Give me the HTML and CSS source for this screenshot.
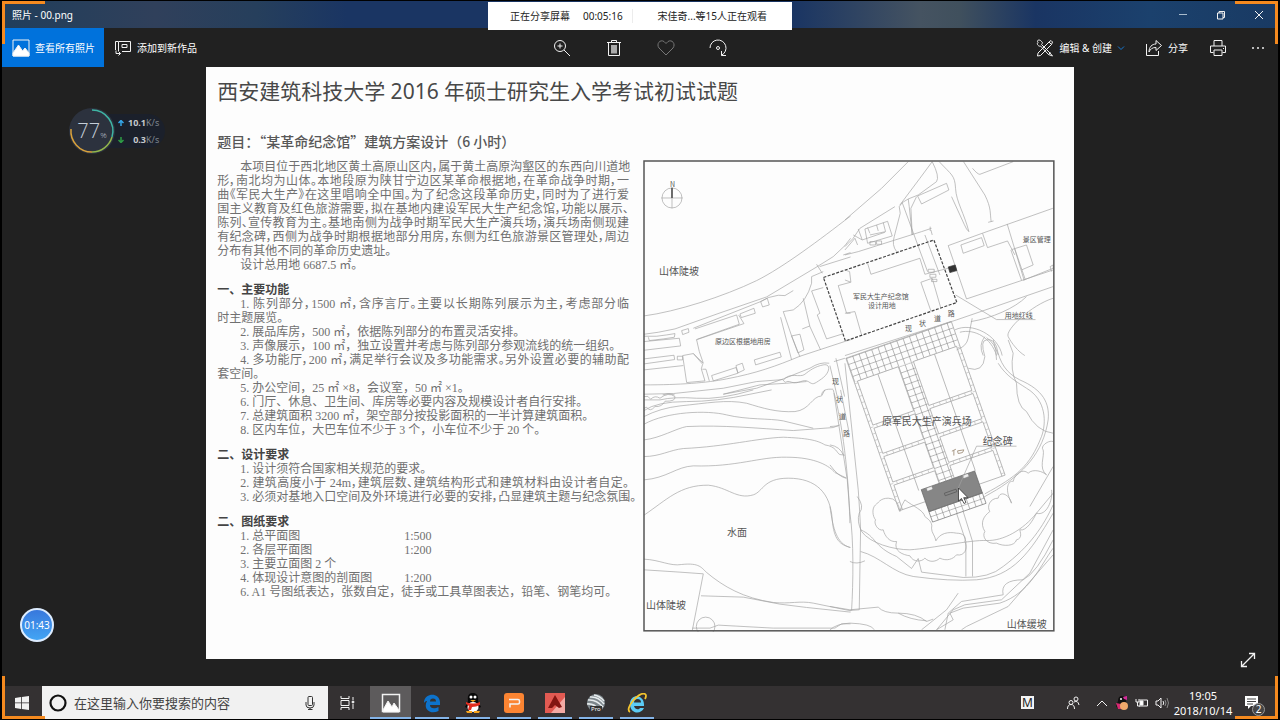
FILE: index.html
```html
<!DOCTYPE html>
<html lang="zh-CN">
<head>
<meta charset="utf-8">
<title>照片 - 00.png</title>
<link rel="stylesheet" href="styles.css">
</head>
<body>
<div class="screen">
  <header class="titlebar">
    <span class="window-title">照片 - 00.png</span>
    <div class="window-buttons">
      <button aria-label="最小化"><svg width="10" height="10" viewBox="0 0 10 10"><path d="M1 4.500h8" stroke="#a9bccd"/></svg></button>
      <button aria-label="还原"><svg width="10" height="10" viewBox="0 0 10 10"><path d="M1.500 3h5.500v6H1.500zM3 3V1.500h5.500V7.500H7"/></svg></button>
      <button aria-label="关闭"><svg width="10" height="10" viewBox="0 0 10 10"><path d="M1 1l8 8M9 1l-8 8"/></svg></button>
    </div>
  </header>

  <nav class="toolbar">
    <div class="tools">
      <button class="tool primary">
        <svg width="18" height="18" viewBox="0 0 18 18"><path d="M1 1h16v16H1z"/><path d="M1 14l5.500-8 4 6 2.500-3 4 5v3H1z" fill="#fff"/></svg>
        <span>查看所有照片</span>
      </button>
      <button class="tool">
        <svg width="18" height="18" viewBox="0 0 18 18"><path d="M4.500 12V2.500h12v10H8M1.500 11V2.500H4M8 5.500h5v3H8zM2 11.500v3h4.500M4.500 12.500l2 2-2 2"/></svg>
        <span>添加到新作品</span>
      </button>
    </div>
    <div class="tools center">
      <button class="tool icon" aria-label="放大"><svg width="18" height="18" viewBox="0 0 18 18"><circle cx="7" cy="7" r="5.500"/><path d="M11 11l6 6M4.500 7h5M7 4.500v5"/></svg></button>
      <button class="tool icon" aria-label="删除"><svg width="18" height="18" viewBox="0 0 18 18"><path d="M2 3.500h14M6.500 3V1.500h5V3M3.500 4v12.500h11V4"/><path d="M6 6h6v8.500H6z" fill="#aaa" stroke="none"/></svg></button>
      <button class="tool icon dim" aria-label="收藏"><svg width="18" height="18" viewBox="0 0 18 18"><path d="M9 16L2 9C-1 5 3 0 7 2.500L9 4.500l2-2C15 0 19 5 16 9z"/></svg></button>
      <button class="tool icon" aria-label="旋转"><svg width="18" height="18" viewBox="0 0 18 18"><path d="M1 9A8 8 0 1 1 12.500 16.200M12.500 12v4.500H17"/><circle cx="9" cy="9" r="1.500"/></svg></button>
    </div>
    <div class="tools end">
      <button class="tool edit">
        <svg width="18" height="18" viewBox="0 0 18 18"><path d="M2 14L13 3l2.500 2.500-11 11L1.500 17zM13 3l2-1.500 1.500 1.500-1 2.500M2 3.500C0 1 4 0 5.500 2.500c2 1-0 3 0 3L14 14l2.500 3-4-1.500L4.500 7C3 8 0 5 2 3.500zM12.500 15.500l2-2"/></svg>
        <span>编辑 &amp; 创建</span>
        <svg class="chevron" width="8" height="8" viewBox="0 0 8 8"><path d="M1 2.500l3 3 3-3"/></svg>
      </button>
      <button class="tool">
        <svg width="18" height="18" viewBox="0 0 18 18"><path d="M1.500 5v11.500h12V12M4 13c0-5 3-8 7-8V1.500L16.500 6.500 11 11.500V8.500C7 8.500 5.500 10 4 13z"/></svg>
        <span>分享</span>
      </button>
      <button class="tool square" aria-label="打印"><svg width="18" height="18" viewBox="0 0 18 18"><path d="M5 7V1.500h8V7M4.500 13.500h-3v-6.500h15v6.500h-3M5 11h8v5.500H5zM14 9.500h1"/></svg></button>
      <button class="tool square" aria-label="更多"><svg width="14" height="4" viewBox="0 0 14 4"><g fill="#eee" stroke="none"><circle cx="2" cy="2" r="1"/><circle cx="7" cy="2" r="1"/><circle cx="12" cy="2" r="1"/></g></svg></button>
    </div>
  </nav>

  <main class="stage">
    <article class="paper">
      <h1>西安建筑科技大学 2016 年硕士研究生入学考试初试试题</h1>
      <h2>题目：“某革命纪念馆”建筑方案设计（6 小时）</h2>
      <div class="columns">
        <div class="brief">
          <section>
            <p><span class="row full first">本项目位于西北地区黄土高原山区内，属于黄土高原沟壑区的东西向川道地</span><span class="row full">形，南北均为山体。本地段原为陕甘宁边区某革命根据地，在革命战争时期，一</span><span class="row full">曲《军民大生产》在这里唱响全中国。为了纪念这段革命历史，同时为了进行爱</span><span class="row full">国主义教育及红色旅游需要，拟在基地内建设军民大生产纪念馆，功能以展示、</span><span class="row full">陈列、宣传教育为主。基地南侧为战争时期军民大生产演兵场，演兵场南侧现建</span><span class="row full">有纪念碑，西侧为战争时期根据地部分用房，东侧为红色旅游景区管理处，周边</span><span class="row">分布有其他不同的革命历史遗址。</span></p>
            <p class="row first">设计总用地 6687.5 ㎡。</p>
          </section>
          <section>
            <h3>一、主要功能</h3>
            <p><span class="row full first">1. 陈列部分，1500 ㎡，含序言厅。主要以长期陈列展示为主，考虑部分临</span><span class="row">时主题展览。</span></p>
            <p class="row first">2. 展品库房，500 ㎡，依据陈列部分的布置灵活安排。</p>
            <p class="row first">3. 声像展示，100 ㎡，独立设置并考虑与陈列部分参观流线的统一组织。</p>
            <p><span class="row full first">4. 多功能厅，200 ㎡，满足举行会议及多功能需求。另外设置必要的辅助配</span><span class="row">套空间。</span></p>
            <p class="row first">5. 办公空间，25 ㎡ ×8，会议室，50 ㎡ ×1。</p>
            <p class="row first">6. 门厅、休息、卫生间、库房等必要内容及规模设计者自行安排。</p>
            <p class="row first">7. 总建筑面积 3200 ㎡，架空部分按投影面积的一半计算建筑面积。</p>
            <p class="row first">8. 区内车位，大巴车位不少于 3 个，小车位不少于 20 个。</p>
          </section>
          <section>
            <h3>二、设计要求</h3>
            <p class="row first">1. 设计须符合国家相关规范的要求。</p>
            <p class="row full first">2. 建筑高度小于 24m，建筑层数、建筑结构形式和建筑材料由设计者自定。</p>
            <p class="row full first">3. 必须对基地入口空间及外环境进行必要的安排，凸显建筑主题与纪念氛围。</p>
          </section>
          <section>
            <h3>二、图纸要求</h3>
            <p class="row first scaled"><span>1. 总平面图</span><span>1:500</span></p>
            <p class="row first scaled"><span>2. 各层平面图</span><span>1:200</span></p>
            <p class="row first">3. 主要立面图 2 个</p>
            <p class="row first scaled"><span>4. 体现设计意图的剖面图</span><span>1:200</span></p>
            <p class="row first">6. A1 号图纸表达，张数自定，徒手或工具草图表达，铅笔、钢笔均可。</p>
          </section>
        </div>

        <svg class="siteplan" viewBox="643 160 412 472" role="img" aria-label="总平面地形图">
          <defs>
            <pattern id="tiles" width="20" height="19" patternUnits="userSpaceOnUse"><path d="M0 0H20M0 0V19" stroke="#777" stroke-width="3" fill="none"/></pattern>
            <pattern id="edge" width="10" height="20" patternUnits="userSpaceOnUse"><path d="M0 0H10" stroke="#888" stroke-width="2" fill="none"/></pattern>
            <pattern id="band" width="20" height="10" patternUnits="userSpaceOnUse"><path d="M0 0V10" stroke="#888" stroke-width="2" fill="none"/></pattern>
          </defs>

          <!-- north-west: hillside road and old settlement -->
          <g class="ink" transform="translate(640 155) scale(.3333)">
            <circle cx="96" cy="129" r="30"/><path d="M64 129H128M96 98V160"/><path d="M96 98V129" stroke="#555" stroke-width="5"/>
            <path d="M12 483C110 470 250 425 350 377C430 337 540 254 632 183"/>
            <path d="M12 538L55 532L105 522L240 474L380 426L532 335L580 305L615 272L632 250"/>
            <path d="M160 520L362 440L385 428L415 421L435 422L460 407"/>
            <path d="M165 522L290 480L298 508L172 553M168 555L312 506L296 480M300 477L342 460L346 475L304 488zM362 440L382 430L388 450L368 456z"/>
            <path d="M343 615L420 592L424 606L347 630zM215 662L288 638L294 655L220 678zM288 632L307 625L313 645L294 654z"/>
            <path d="M12 544H50L80 540L105 536L103 547L70 552L28 557L25 547M125 527L145 521L147 532L128 539z"/>
            <path d="M12 560L118 550L122 573L12 586M12 612L102 601L104 614L12 627M112 604H128V615H112zM12 645L130 632M128 602L160 596L190 625L178 590L170 555M160 596L188 628L184 642L195 678L140 683L128 602M187 643H198L208 678"/>
            <path d="M12 690C120 690 200 684 260 672C350 655 410 633 480 604L620 558L640 552"/>
            <path d="M422 487L455 615M430 470L460 465Q500 440 515 385V365L550 350M430 470L455 543L480 606M490 430L510 515L542 585M455 543L480 538L492 585L474 594zM487 522L510 513M515 408L550 398M515 408L540 475L532 480L560 552L608 537"/>
            <path d="M530 328L547 355M539 335L632 306M595 392L632 382M595 392L620 475H632M610 300L632 293"/>
            <path d="M570 632L592 725M588 610L614 725M568 625Q540 620 510 640L430 672L350 700L250 718M250 718L360 690L440 685L500 680"/>
            <path d="M430 676C450 650 480 670 495 658S525 635 550 630S570 655 545 672S520 690 505 680S475 690 455 682S440 690 430 676M545 720C548 700 570 703 580 703"/>
            <path d="M12 718L100 716L250 700L350 680L430 674M68 720Q85 712 104 720"/>
          </g>

          <!-- north-east: administration blocks and project site -->
          <g class="ink" transform="translate(845 155) scale(.3333)">
            <path d="M0 195L110 100L190 20M0 275Q25 255 45 220L150 155M165 150L225 70L262 20M262 20Q285 65 275 80L220 120L190 132L172 143L163 155L166 175"/>
            <path d="M172 143L248 350M166 175L148 245Q140 270 155 290M190 132L193 155L202 240M215 125L198 160L202 240M0 300L40 290L230 230L260 220M256 215V228M258 225L262 240"/>
            <path d="M40 222L52 255L25 240M52 255L120 232M60 222L128 199L142 243L68 265zM75 235L68 218M95 210L100 228M115 203L122 230L75 240M38 270L30 250L0 285"/>
            <path d="M283 20C320 60 330 60 332 100S358 175 372 230Q365 225 358 208L320 125M356 20L420 120C440 160 435 175 439 200M430 202L446 198M218 123L305 85L312 105L230 147z"/>
            <path d="M383 40Q398 58 405 58L505 20M310 272L412 235L624 160M310 272L365 432L625 345M348 270L410 248L418 272L355 295zM413 235L428 278L488 258L510 300M487 207L538 376M498 285L530 376M500 284L545 270L565 330L530 345M510 282L541 373M535 376L625 340V330L616 335L620 350"/>
            <path d="M68 325L78 358L225 310L240 358L310 340M228 382L262 370L288 460M228 382L258 468M0 375L18 382L14 350L0 345M0 475L30 470L50 540M240 240L285 360"/>
            <path d="M332 420L455 494H572M0 602L335 495L625 395M625 430C560 450 480 525 490 545S520 590 540 602M382 490L370 550Q365 575 335 585"/>
            <path d="M330 525C380 500 460 540 472 602M345 532C390 520 440 550 455 602M420 545Q400 570 415 602M425 548Q450 565 460 600M378 500C440 490 510 460 545 425"/>
            <path d="M250 343H268V352H250zM255 358H273V367H255zM260 373H276V380H260zM75 260H92V270H75zM95 258H110V268H95z"/>
            <path d="M310 336L331 330L336 347L315 353z" fill="#333" stroke="#333"/>
          </g>
          <path d="M823.500 277.500L934 240L957 302.500L845.500 341z" fill="none" stroke="#444" stroke-width="1.200" stroke-dasharray="3 1.500"/>

          <!-- south-west: terraces and water -->
          <g class="ink" transform="translate(640 390) scale(.3333)">
            <path d="M12 30H60Q100 20 170 25T340 0M12 62Q50 35 140 35T330 13L395 0M12 80Q60 55 120 48C200 40 260 28 320 40C370 55 410 68 465 65C510 60 515 20 545 18L555 0"/>
            <path d="M12 103C80 65 200 60 260 75S390 85 430 93L520 115M12 150C60 145 110 115 140 110C250 105 350 115 460 122L580 113L600 105"/>
            <path d="M12 200C60 200 90 180 130 176C260 170 350 145 430 142C500 145 530 150 555 165C590 170 590 190 600 194L615 196"/>
            <path d="M12 270C80 265 110 230 160 228C290 232 360 200 440 202C530 202 570 230 585 248L620 265M12 376C80 330 120 285 205 286C265 292 290 330 340 315C370 305 370 265 445 265C530 265 572 310 577 390C582 450 600 465 632 473"/>
            <path d="M12 508C60 510 90 530 125 524C180 518 185 535 200 548C250 590 310 625 400 638C450 643 480 632 520 640L632 663M12 540L120 547L190 552L157 722M183 618L310 622L420 643L500 653L632 667"/>
            <circle cx="197" cy="710" r="28"/><path d="M157 715H210L235 706L400 715H585L605 702H632"/>
            <path d="M12 20Q25 15 32 28Q45 15 60 25Q85 5 105 20Q108 35 75 34Q65 52 45 50Q30 68 20 52L12 55"/>
            <path d="M580 0C600 70 625 210 630 400M602 0L626 120"/>
          </g>

          <!-- parade ground -->
          <g transform="translate(830 340) scale(.3333)">
            <g class="ink">
              <path d="M12 65L45 55M45 70L85 450Q90 520 92 570L88 810M60 520C72 600 70 730 65 812M60 812L88 810M60 665Q80 675 105 663"/>
              <path d="M0 375Q25 410 48 415M0 260L25 258M0 315Q30 320 40 345M0 500C10 570 20 610 60 623M82 470Q105 500 88 520Q80 545 95 575C120 610 190 630 240 630C310 625 420 600 470 602S580 570 620 520L670 460"/>
              <path d="M12 160L52 420L60 520"/>
              <path d="M92 570C140 590 130 620 200 650L245 686L265 656L275 697L400 713Q480 715 520 680C600 620 640 560 670 495M92 635C150 650 190 700 250 710Q360 725 440 720C550 710 600 640 670 520"/>
              <path d="M380 520L408 605V710M400 515L428 605V710"/>
              <path d="M415 85Q460 100 465 50Q450 0 470 0Q490 -5 500 20C510 70 530 100 570 120C640 150 660 190 655 240C640 340 580 400 500 450L460 473M505 70C530 110 560 125 590 145C650 180 650 250 635 290C600 380 560 410 465 462"/>
              <path d="M490 0Q500 30 500 60M535 0L550 40Q540 90 560 130Q560 200 590 215Q620 275 670 280"/>
              <path d="M210 515Q205 475 175 475C150 475 145 490 137 495C125 505 128 530 137 540C130 550 145 575 160 570C165 590 180 608 200 605C190 635 220 645 240 648C250 668 275 667 285 655C300 670 320 665 330 655C350 665 370 658 380 645C405 650 415 625 405 605C410 590 400 580 380 580C355 575 330 580 318 603C315 585 305 580 305 565C310 545 290 535 285 530C280 510 250 500 225 480Q215 495 210 515"/>
              <path d="M545 490C540 465 510 450 505 475C480 475 470 500 480 515C460 530 450 550 465 575C455 590 470 615 500 610C520 620 555 620 560 600C580 595 570 575 570 570C590 575 610 540 620 520C650 530 670 480 665 450M545 490C520 440 540 420 550 425C555 400 580 385 595 400C610 385 640 395 650 405C625 385 645 350 640 330C630 320 655 300 670 305"/>
              <path d="M670 380L600 500M670 570L600 700L515 780L405 795L370 810L320 870M670 600Q620 700 580 720Q510 720 520 765L395 785L355 820L345 870M670 625C630 680 600 760 510 790L400 805L360 820L370 840L320 870M670 645L535 800L410 860L395 870M275 870L350 810L385 760M0 800L60 810L145 802Q160 820 205 820Q260 820 290 845L310 838M205 820Q240 840 290 843M0 870Q20 852 60 850Q125 852 133 870"/>
            </g>
            <g transform="translate(48 55) rotate(-19.300)">
              <path d="M0 0H335V76H0zM140 76H188V447H140z" fill="url(#tiles)"/>
              <path d="M0 76H10V485H0zM325 76H335V489H325z" fill="url(#edge)"/>
              <path d="M10 216H140V226H10zM10 306H140V316H10zM10 397H140V407H10zM188 216H325V226H188zM188 306H325V316H188zM188 397H325V407H188z" fill="url(#band)"/>
              <path class="ink" d="M0 0H335V489H253M83 485H0V0M10 76H140V216H10zM188 76H325V216H188zM10 226H140V306H10zM188 226H325V306H188zM10 316H140V397H10zM188 316H325V397H188zM140 447V407H10V485M188 447V407H325V489M75 76V447M255 76V447"/>
              <path d="M83 447H253V517H83z" fill="#868686" stroke="#666" stroke-width="2"/>
              <path d="M83 517H253V550H83z" fill="url(#tiles)" stroke="#777" stroke-width="2"/>
              <path d="M100 449H115V456H100zM215 449H230V456H215z" fill="#eee"/>
              <path d="M145 480H182V488H145z" fill="none" stroke="#555" stroke-width="2"/>
            </g>
            <path class="ink" d="M560 319H440L385 445"/>
            <path d="M366 334L378 328M372 331V347M383 333L402 330L398 338L385 341z" stroke="#a99a88" stroke-width="3" fill="none"/>
          </g>

          <g class="label large">
            <text x="659" y="275">山体陡坡</text><text x="727" y="536">水面</text><text x="646" y="609">山体陡坡</text><text x="1007" y="628">山体缓坡</text>
            <text x="882" y="425">原军民大生产演兵场</text><text x="983" y="445">纪念碑</text>
          </g>
          <g class="label small">
            <text x="715" y="344">原边区根据地用房</text><text x="853" y="299">军民大生产纪念馆</text><text x="868" y="308">设计用地</text><text x="1023" y="242">景区管理</text><text x="1005" y="318">用地红线</text>
            <text x="905" y="331">现</text><text x="919" y="326">状</text><text x="934" y="321">道</text><text x="948" y="316">路</text>
            <text x="832" y="384">现</text><text x="836" y="402">状</text><text x="839" y="419">道</text><text x="843" y="436">路</text>
            <text x="670" y="187">N</text>
          </g>
          <rect x="644" y="161" width="410" height="470" fill="none" stroke="#555" stroke-width="1.500"/>
        </svg>
      </div>
    </article>
  </main>

  <footer class="taskbar">
    <button class="start" aria-label="开始"><svg width="14" height="14" viewBox="0 0 14 14"><path d="M0 2l6-1v5.500H0zM6.800 .9L14 0v6.500H6.800zM0 7.300h6v5.600l-6-.9zM6.800 7.300H14V14l-7.200-1z" fill="#f2f2f2" stroke="none"/></svg></button>
    <label class="search">
      <svg width="20" height="20" viewBox="0 0 20 20"><circle cx="10" cy="10" r="7.500" stroke="#111" stroke-width="2.200"/></svg>
      <input type="text" aria-label="搜索" placeholder="在这里输入你要搜索的内容">
      <svg width="12" height="16" viewBox="0 0 12 16"><rect x="4" y="1.500" width="4.500" height="9" rx="1" stroke="#333"/><path d="M2 7v3q0 3 4 3t4-3V7M6 13v2M4 14.500h4.500" stroke="#333"/></svg>
    </label>
    <div class="apps">
      <button class="app plain" aria-label="任务视图"><svg width="16" height="14" viewBox="0 0 16 14"><path d="M2 0v2.500M10 0v2.500M2 4.500h8v5H2zM2 14v-2.500h8V14M2 2.500h8M14 1v3M14 8v5"/><circle cx="14" cy="6" r="1" fill="#fff"/></svg></button>
      <button class="app active" aria-label="照片"><svg width="20" height="20" viewBox="0 0 20 20"><path d="M1.500 1.500h17v17h-17z" stroke-width="1.500"/><path d="M2 17l5-9 4 6 2-4 5 7v2H2z" fill="#fff"/></svg></button>
      <button class="app" aria-label="Edge"><svg width="20" height="20" viewBox="0 0 20 20"><path d="M2 9C3 0 17-1 18 9v3H8c0 4 5 4 8.500 2v4C7 22 1 15 5 8 4 8 3 8.500 2 10z" fill="#0d73cc" stroke="none"/><path d="M8 8.500q0-3 3-3t3 3z" fill="#333" stroke="none"/></svg></button>
      <button class="app" aria-label="QQ"><svg width="20" height="20" viewBox="0 0 20 20"><g stroke="none"><path d="M5 8C4 1 7 0 10 0s6 2 5 8l3 6-2 1-1-2H5l-1 2-2-1z" fill="#080808"/><ellipse cx="10" cy="14" rx="5.500" ry="5" fill="#fff"/><path d="M3 9q7 3 14 0v3q-4 2-8 2l-1 3H5l1-4-3-2z" fill="#e22d20"/><circle cx="8" cy="4" r="1.500" fill="#fff"/><circle cx="12" cy="4" r="1.500" fill="#fff"/><path d="M7 7h6l-3 2zM3 18h6v2H4zM11 18h6l-1 2h-5z" fill="#f7a51b"/></g></svg></button>
      <button class="app" aria-label="WPS 演示"><svg width="20" height="20" viewBox="0 0 20 20"><rect width="20" height="20" rx="3" fill="#fb8432" stroke="none"/><path d="M5 6.500h9q1.500 0 1.500 1.500v1.500q0 1.500-1.500 1.500H6v3.500" stroke-width="1.500"/></svg></button>
      <button class="app" aria-label="AutoCAD"><svg width="20" height="20" viewBox="0 0 20 20"><path d="M0 0h20v20H0z" fill="#e25a52" stroke="none"/><path d="M20 4v16H6z" fill="#f3aaa4" stroke="none"/><path d="M10 2L3 15h4l3-3 4 3 3-1z" fill="#831511" stroke="none"/></svg></button>
      <button class="app" aria-label="Google Earth Pro"><svg width="20" height="20" viewBox="0 0 20 20"><circle cx="10" cy="10" r="9" fill="#7d868b" stroke="none"/><path d="M2 7q8-1 15 7M4 4q8-1 14 7M8 2q6 1 10 6M1 11q7-1 12 6" stroke="#e7ecee" stroke-width="1.500"/><rect x="4" y="13" width="12" height="6" fill="#333" stroke="none"/><text x="5" y="18" font-size="6" fill="#fff" stroke="none">Pro</text></svg></button>
      <button class="app" aria-label="Internet Explorer"><svg width="20" height="20" viewBox="0 0 20 20"><path d="M17 13H7c1 4 5 4 6 2h4c-3 7-14 6-14-4C3 0 18 1 17 13z" fill="#5bcbf5" stroke="none"/><path d="M7 9.500q0-3.500 3.500-3.500T14 9.500z" fill="#333" stroke="none"/><path d="M3 19C-3 16 12-2 18 1q2 1 0 5" stroke="#f5c52e" stroke-width="1.800"/></svg></button>
    </div>
    <div class="tray">
      <button class="ime" aria-label="输入法">M</button>
      <button class="people" aria-label="人脉"><svg width="14" height="14" viewBox="0 0 14 14"><circle cx="5" cy="6.500" r="2"/><circle cx="10" cy="3" r="2"/><path d="M1.500 13q0-4.500 3.500-4.500T8.500 13M8 6q4-2 5 3"/></svg></button>
      <button aria-label="显示隐藏的图标"><svg width="12" height="8" viewBox="0 0 12 8"><path d="M1 7l5-5 5 5"/></svg></button>
      <button aria-label="QQ 消息"><svg width="14" height="14" viewBox="0 0 14 14"><g stroke="none"><path d="M3 5q0-5 4-5t4 5l2 5-2 3H3L1 10z" fill="#111"/><path d="M8 1l4-1v4l-3-1z" fill="#d52a9b"/><path d="M1 7l5 1v5H3z" fill="#d52a70"/><circle cx="9" cy="10" r="4" fill="#f0a96b"/><circle cx="6" cy="3" r="1" fill="#fff"/></g></svg></button>
      <button aria-label="电池"><svg width="14" height="10" viewBox="0 0 14 10"><path d="M4.500 2h8v6H4M1 1v3h3V1M2.500 4v4H5"/><path d="M5 3h3v4H5z" fill="#fff"/></svg></button>
      <button aria-label="音量"><svg width="14" height="12" viewBox="0 0 14 12"><path d="M1 4h2l3-3v10L3 8H1zM8 4q1.500 2 0 4"/><path d="M10 3q2 3 0 6M12 1q3 5 0 10" stroke="#888"/></svg></button>
      <div class="clock"><time>19:05</time><time>2018/10/14</time></div>
      <button class="notice" aria-label="通知"><svg width="16" height="16" viewBox="0 0 16 16"><path d="M1 1h13v10H7l-3 3v-3H1z" fill="#fff" stroke="none"/><path d="M3 4h9M3 6.500h9M3 9h6" stroke="#444"/></svg><span class="badge">2</span></button>
    </div>
  </footer>

  <aside class="share-banner"><span>正在分享屏幕</span><span class="elapsed">00:05:16</span><span class="viewers">宋佳奇...等15人正在观看</span></aside>

  <aside class="monitor">
    <div class="dial"><svg width="48" height="48" viewBox="0 0 48 48"><circle cx="24" cy="24" r="23" fill="#2c323e" stroke="none"/><path d="M24 3A21 21 0 0 1 44 30" stroke="#3fb5a4" stroke-width="1.500"/><path d="M44 30A21 21 0 0 1 24 45" stroke="#92b64c" stroke-width="1.500"/><path d="M24 45A21 21 0 0 1 3 22" stroke="#d9a13b" stroke-width="1.500"/></svg><span class="percent">77<small>%</small></span></div>
    <div class="rates">
      <div><svg width="6" height="6" viewBox="0 0 6 6"><path d="M3 6V1M0.500 3L3 .5 5.500 3" stroke="#35a6e8" stroke-width="1.500"/></svg><b>10.1</b><span>K/s</span></div>
      <div><svg width="6" height="6" viewBox="0 0 6 6"><path d="M3 0V5M.5 3L3 5.500 5.500 3" stroke="#2e9c46" stroke-width="1.500"/></svg><b>0.3</b><span>K/s</span></div>
    </div>
  </aside>
  <div class="timer">01:43</div>
  <button class="expand" aria-label="全屏"><svg width="16" height="16" viewBox="0 0 16 16"><path d="M1.500 14.500l13-13M9 1.500h5.500V7M1.500 9v5.500H7" stroke-width="1.300"/></svg></button>
  <svg class="pointer" width="12" height="18" viewBox="0 0 12 18"><path d="M1.500 1v13l3-2.500 2.500 5 2-1-2.300-4.800H11z" fill="#fff" stroke="#333" stroke-width=".8"/></svg>
  <i class="corner tl"></i><i class="corner tr"></i><i class="corner bl"></i><i class="corner br"></i>
</div>
</body>
</html>
```
FILE: styles.css
```css
* { box-sizing: border-box; }

body {
  margin: 0;
  background: #000;
  color: #fff;
  font: 10px/14px "Noto Sans", "Noto Sans CJK SC", sans-serif;
}

button {
  margin: 0;
  padding: 0;
  border: 0;
  background: none;
  color: inherit;
  font: inherit;
  display: flex;
  align-items: center;
  justify-content: center;
}

svg { flex: none; fill: none; stroke: #f2f2f2; }

.screen {
  position: relative;
  min-height: 100vh;
  padding: 1px 2px;
  display: flex;
  flex-direction: column;
  background: #000;
}

/* window chrome */
.titlebar {
  height: 27px;
  padding-left: 10px;
  display: flex;
  align-items: center;
  justify-content: space-between;
  background: linear-gradient(90deg, #203e5b 0%, #30405b 12%, #263f5c 20%, #1a3563 27%, #1a3563 62%, #455361 72%, #40505d 75%, #1a3563 81%, #1b416d 90%, #193a63 100%);
}
.window-buttons { display: flex; }
.window-buttons button { width: 38px; height: 27px; }

.toolbar {
  height: 39px;
  display: grid;
  grid-template-columns: 1fr auto 1fr;
  background: #212121;
}
.tools { display: flex; }
.tools.end { justify-content: flex-end; }
.tool { padding: 0 10px; gap: 5px; }
.tool.primary { padding-right: 9px; background: #0072dc; }
.tool.icon { width: 52px; }
.tool.square { width: 40px; }
.tool.dim svg { stroke: #777; }
.chevron { stroke: #1779d4; }

/* picture on show */
.stage {
  flex: 1;
  display: flex;
  justify-content: center;
  align-items: flex-start;
  padding-bottom: 27px;
  background: #212121;
}
.paper {
  width: 68%;
  padding: 9px 19px 27px 11px;
  background: #fdfdfd;
  color: #707070;
}
.paper h1 {
  margin: 0 0 25px;
  color: #484848;
  font-size: 21px;
  line-height: 30px;
  font-weight: 400;
  white-space: nowrap;
}
.paper h2 {
  margin: 0 0 9px;
  color: #585858;
  font: 500 14px/20px "Noto Sans CJK SC", sans-serif;
}
.columns {
  display: grid;
  grid-template-columns: minmax(0, 1fr) minmax(0, 1fr);
  gap: 14px;
}
.brief {
  display: flex;
  flex-direction: column;
  gap: 11px;
  font: 12px/14px "Liberation Serif", "Noto Sans CJK SC", serif;
  white-space: nowrap;
}
.brief h3 { margin: 0; color: #444; font-size: 12px; line-height: 14px; }
.brief p { margin: 0; }
.row { display: block; height: 14px; }
.brief .first { padding-left: 23px; }
.full {
  font-feature-settings: "palt";
  text-align: justify;
  text-align-last: justify;
}
.brief .scaled { display: grid; grid-template-columns: 164px auto; }

.siteplan { width: 100%; height: auto; display: block; }
.ink { fill: none; stroke: #a2a2a2; stroke-width: 2; }
.label { fill: #555; stroke: none; font-family: "Noto Sans CJK SC", sans-serif; }
.large { font-size: 10px; }
.small { font-size: 7px; }

/* taskbar */
.taskbar {
  height: 33px;
  display: flex;
  background: #343132;
}
.start { width: 40px; }
.search {
  width: 286px;
  padding: 0 12px 0 6px;
  display: flex;
  align-items: center;
  gap: 6px;
  background: #f1f1f1;
}
.search input {
  flex: 1;
  min-width: 0;
  padding: 0;
  border: 0;
  outline: 0;
  background: none;
  color: #333;
  font: 13px/20px "Noto Sans CJK SC", sans-serif;
}
.search input::placeholder { color: #444; opacity: 1; }
.apps { display: flex; }
.app {
  width: 41px;
  background: linear-gradient(#84b4e8, #84b4e8) center bottom / 34px 2px no-repeat;
}
.app.plain { width: 42px; padding-right: 4px; background: none; }
.app.active { background: #5d5b5c linear-gradient(#84b4e8, #84b4e8) center bottom / 41px 2px no-repeat; }
.tray {
  flex: 1;
  display: flex;
  align-items: center;
  justify-content: flex-end;
}
.tray button { width: 20px; }
.tray .ime {
  width: 13px;
  height: 13px;
  margin-right: 32px;
  background: #f4f4f4;
  color: #222;
  font-size: 12px;
  line-height: 13px;
}
.tray .people { width: 14px; margin-right: 12px; }
.clock {
  width: 62px;
  display: flex;
  flex-direction: column;
  align-items: center;
  font-size: 11px;
  line-height: 15px;
}
.tray .notice { position: relative; width: 44px; height: 30px; padding-right: 8px; }
.badge {
  position: absolute;
  left: 18px;
  top: 15px;
  width: 13px;
  height: 13px;
  border: 1px solid #999;
  border-radius: 50%;
  background: #444;
  line-height: 11px;
}

/* floating pieces */
.share-banner {
  position: absolute;
  top: 2px;
  left: 50%;
  transform: translateX(-50%);
  width: 304px;
  height: 28px;
  padding: 0 25px 0 22px;
  display: flex;
  align-items: center;
  background: #fff;
  color: #222;
}
.elapsed { margin-left: 13px; padding-right: 9px; border-right: 1px solid #ececec; }
.viewers { margin-left: auto; }

.monitor { position: absolute; left: 68px; top: 107px; display: flex; align-items: center; }
.dial { position: relative; z-index: 1; width: 48px; height: 48px; }
.percent {
  position: absolute;
  inset: 0;
  text-align: center;
  color: #c5ced8;
  font: 300 20px/48px "Open Sans", sans-serif;
}
.percent small { font-size: 8px; }
.rates {
  margin-left: -12px;
  padding: 0 6px 0 14px;
  border-radius: 0 18px 18px 0;
  background: #1b202b;
  color: #7f858d;
  font-size: 9px;
  line-height: 17px;
}
.rates div { display: flex; align-items: center; justify-content: flex-end; }
.rates svg { margin-right: auto; }
.rates b { margin-left: 4px; color: #c5c8cc; }

.timer {
  position: absolute;
  left: 20px;
  top: 608px;
  width: 34px;
  height: 34px;
  border: 2px solid #dcecff;
  border-radius: 50%;
  background: linear-gradient(#3878dc, #43a5f4);
  line-height: 30px;
  text-align: center;
}
.expand { position: absolute; right: 24px; bottom: 52px; }
.pointer { position: absolute; left: 957px; top: 487px; }

.corner { position: absolute; width: 43px; height: 43px; border: 0 solid #f58a1f; pointer-events: none; }
.tl { left: 2px; top: 1px; border-width: 3px 0 0 3px; }
.tr { right: 2px; top: 1px; border-width: 3px 3px 0 0; }
.bl { left: 2px; bottom: 1px; border-width: 0 0 3px 3px; }
.br { right: 2px; bottom: 1px; border-width: 0 3px 3px 0; }
```
